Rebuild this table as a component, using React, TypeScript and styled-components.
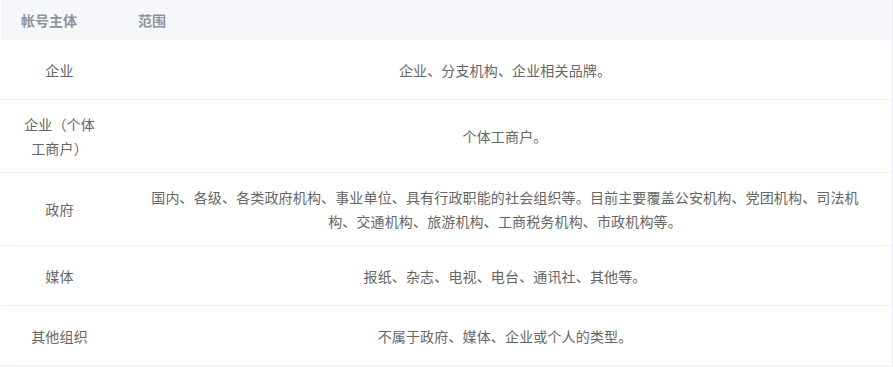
import React from "react";
import styled, { createGlobalStyle } from "styled-components";

const GlobalStyle = createGlobalStyle`
  html, body {
    margin: 0;
    padding: 0;
    background: #ffffff;
  }
  body {
    font-family: "Noto Sans CJK SC", "Noto Sans", "Liberation Sans", sans-serif;
    font-size: 14px;
  }
  * { box-sizing: border-box; }
`;

const Table = styled.div`
  margin-left: 1px;
  width: 892px;
  border-right: 1px solid #ebeef5;
  display: flex;
  flex-direction: column;
`;

const HeaderRow = styled.div`
  display: grid;
  grid-template-columns: 117px 1fr;
  height: 40px;
  background: #f5f7fa;
`;

const HeaderCell = styled.div`
  display: flex;
  align-items: center;
  padding: 0 20px;
  color: #909399;
  font-weight: bold;
  font-size: 14px;
  line-height: 24px;
`;

const Row = styled.div`
  display: grid;
  grid-template-columns: 117px 1fr;
  min-height: 60px;
  border-bottom: 1px solid #ebeef5;
`;

const Cell = styled.div<{ $wide?: boolean }>`
  display: flex;
  align-items: center;
  justify-content: center;
  text-align: center;
  padding: 12px ${(p) => (p.$wide ? "30px" : "20px")};
  color: #666666;
  font-size: 14px;
  line-height: 24px;
  letter-spacing: 0.15px;
`;

const rows: [string, string][] = [
  ["企业", "企业、分支机构、企业相关品牌。"],
  ["企业（个体工商户）", "个体工商户。"],
  [
    "政府",
    "国内、各级、各类政府机构、事业单位、具有行政职能的社会组织等。目前主要覆盖公安机构、党团机构、司法机构、交通机构、旅游机构、工商税务机构、市政机构等。",
  ],
  ["媒体", "报纸、杂志、电视、电台、通讯社、其他等。"],
  ["其他组织", "不属于政府、媒体、企业或个人的类型。"],
];

export default function App() {
  return (
    <>
      <GlobalStyle />
      <Table>
        <HeaderRow>
          <HeaderCell>帐号主体</HeaderCell>
          <HeaderCell>范围</HeaderCell>
        </HeaderRow>
        {rows.map(([subject, scope]) => (
          <Row key={subject}>
            <Cell>{subject}</Cell>
            <Cell $wide>{scope}</Cell>
          </Row>
        ))}
      </Table>
    </>
  );
}
